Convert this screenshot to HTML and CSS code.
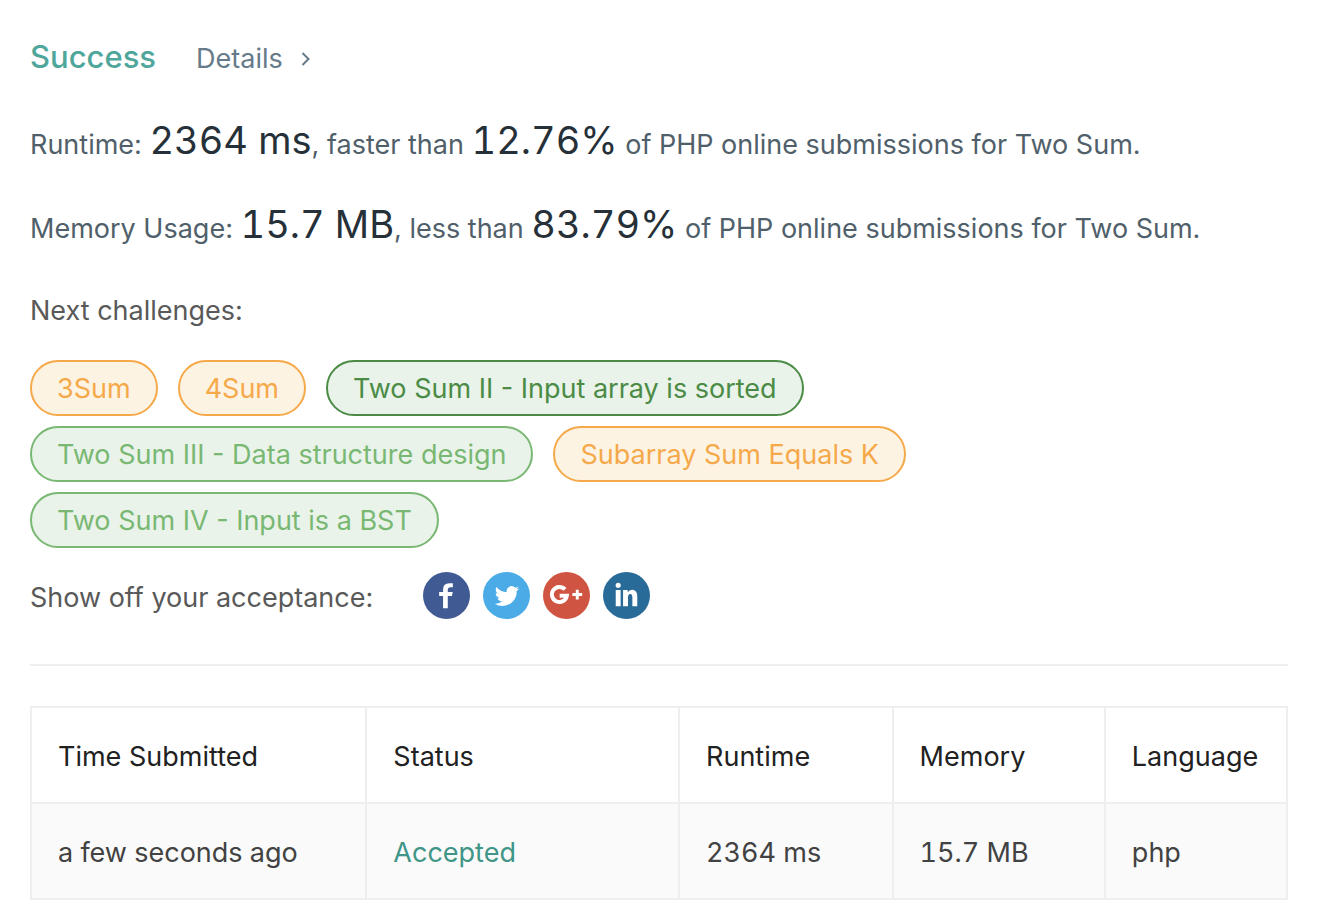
FILE: index.html
```html
<!DOCTYPE html>
<html lang="en">
<head>
  <meta charset="UTF-8" />
  <meta name="viewport" content="width=device-width, initial-scale=1" />
  <title>Two Sum - Submission Result</title>
  <link rel="stylesheet" href="styles.css">
</head>
<body>

<main class="result">
  <div class="header">
    <h1 class="status">Success</h1>
    <a class="details" href="#">Details
      <svg class="chevron" viewBox="0 0 10 16" aria-hidden="true"><path d="M1.5 2l6 6-6 6" /></svg>
    </a>
  </div>

  <p class="stat">Runtime: <span class="value">2364 ms</span>, faster than <span class="value">12.76%</span> of PHP online submissions for Two Sum.</p>
  <p class="stat">Memory Usage: <span class="value">15.7 MB</span>, less than <span class="value">83.79%</span> of PHP online submissions for Two Sum.</p>

  <h2 class="label">Next challenges:</h2>
  <div class="challenges">
    <a class="tag medium" href="#">3Sum</a>
    <a class="tag medium" href="#">4Sum</a>
    <a class="tag solved" href="#">Two Sum II - Input array is sorted</a>
    <a class="tag easy" href="#">Two Sum III - Data structure design</a>
    <a class="tag medium" href="#">Subarray Sum Equals K</a>
    <a class="tag easy" href="#">Two Sum IV - Input is a BST</a>
  </div>

  <div class="share">
    <span class="caption">Show off your acceptance:</span>
    <div class="social">
      <a class="facebook" href="#" aria-label="Facebook">
        <svg viewBox="0 0 48 48"><path d="M20.500 37V24.500h-4v-4h4v-2.500q0-6.500 6.500-6.500h3.500v4h-2.500q-2.700 0-2.700 2.700v2.300h5l-.700 4h-4.300V37z" /></svg>
      </a>
      <a class="twitter" href="#" aria-label="Twitter">
        <svg viewBox="0 0 48 48"><path transform="translate(12 12) scale(1.040)" d="M23.953 4.570a10 10 0 01-2.825.775 4.958 4.958 0 002.163-2.723c-.951.555-2.005.959-3.127 1.184a4.920 4.920 0 00-8.384 4.482C7.690 8.095 4.067 6.130 1.640 3.162a4.822 4.822 0 00-.666 2.475c0 1.710.870 3.213 2.188 4.096a4.904 4.904 0 01-2.228-.616v.060a4.923 4.923 0 003.946 4.827 4.996 4.996 0 01-2.212.085 4.936 4.936 0 004.604 3.417 9.867 9.867 0 01-6.102 2.105c-.390 0-.779-.023-1.170-.067a13.995 13.995 0 007.557 2.209c9.053 0 13.998-7.496 13.998-13.985 0-.210 0-.420-.015-.630a9.935 9.935 0 002.460-2.548z" /></svg>
      </a>
      <a class="google" href="#" aria-label="Google Plus">
        <svg viewBox="0 0 48 48"><path class="line" d="M22.500 17.800A7.700 7.700 0 1 0 24.400 24.200H17" /><path class="plus" d="M30 23h10M35 18v10" /></svg>
      </a>
      <a class="linkedin" href="#" aria-label="LinkedIn">
        <svg viewBox="0 0 48 48"><circle cx="15.500" cy="13.500" r="2.600" /><path d="M13 18.500h5V35h-5zM20.500 18.500h4.700v2.200q1.600-2.600 4.500-2.600 5.300 0 5.300 7V35h-5v-8.800q0-3.800-2.200-3.800-2.300 0-2.300 3.800V35h-5z" /></svg>
      </a>
    </div>
  </div>

  <table class="submissions">
    <thead>
      <tr>
        <th class="time">Time Submitted</th>
        <th class="state">Status</th>
        <th class="runtime">Runtime</th>
        <th class="memory">Memory</th>
        <th>Language</th>
      </tr>
    </thead>
    <tbody>
      <tr>
        <td>a few seconds ago</td>
        <td><a class="accepted" href="#">Accepted</a></td>
        <td>2364 ms</td>
        <td>15.7 MB</td>
        <td>php</td>
      </tr>
    </tbody>
  </table>
</main>

</body>
</html>
```
FILE: styles.css
```css
* {
  box-sizing: border-box;
}
body {
  margin: 0;
  font-family: Inter, sans-serif;
  font-size: 27px;
  line-height: 40px;
  color: #424242;
  background: #fff;
}
a {
  text-decoration: none;
}
.result {
  padding: 35px 32px 0 30px;
}
.header {
  display: flex;
  align-items: baseline;
  gap: 40px;
  margin-bottom: 36px;
}
.status {
  margin: 0;
  font-size: 31px;
  font-weight: 500;
  line-height: 44px;
  color: #4fa69b;
}
.details {
  display: flex;
  align-items: center;
  gap: 18px;
  color: #657b89;
}
.chevron {
  width: 10px;
  height: 16px;
  fill: none;
  stroke: currentColor;
  stroke-width: 2;
}
.stat {
  margin: 0 0 24px;
  line-height: 60px;
  color: #50606a;
}
.value {
  font-size: 38px;
  line-height: 40px;
  font-variant-numeric: tabular-nums;
  color: #263038;
}
.label {
  margin: 32px 0 29px;
  font-size: 27px;
  font-weight: 400;
  color: #595959;
}
.challenges {
  display: flex;
  flex-wrap: wrap;
  gap: 10px 20px;
  margin-bottom: 24px;
}
.tag {
  padding: 7px 25px 5px;
  border: 2px solid;
  border-radius: 28px;
}
.medium {
  color: #f5a94a;
  background: #fdf3e3;
}
.solved {
  color: #4b8b45;
  background: #e9f3ea;
}
.easy {
  color: #79b873;
  background: #e9f3ea;
}
.share {
  display: flex;
  align-items: center;
  gap: 50px;
  padding-bottom: 45px;
  border-bottom: 2px solid #eee;
}
.caption {
  padding-top: 5px;
  color: #595959;
}
.social {
  display: flex;
  gap: 13px;
}
.social a {
  width: 47px;
  height: 47px;
  border-radius: 50%;
}
.social svg {
  display: block;
  fill: #fff;
}
.social .line,
.social .plus {
  fill: none;
  stroke: #fff;
  stroke-width: 4;
}
.social .plus {
  stroke-width: 3;
}
.facebook {
  background: #405a93;
}
.twitter {
  background: #4aabe7;
}
.google {
  background: #cf5542;
}
.linkedin {
  background: #296b98;
}
.submissions {
  width: 100%;
  margin-top: 40px;
  border-collapse: collapse;
  table-layout: fixed;
}
.submissions th,
.submissions td {
  padding: 29px 26px 25px;
  border: 2px solid #eee;
  text-align: left;
  font-weight: 400;
}
.submissions th {
  color: #212121;
}
.submissions td {
  font-variant-numeric: tabular-nums;
}
.submissions tbody tr {
  background: #fafafa;
}
.time {
  width: 26.7%;
}
.state {
  width: 24.9%;
}
.runtime {
  width: 17%;
}
.memory {
  width: 16.9%;
}
.accepted {
  color: #3f9587;
}
```
